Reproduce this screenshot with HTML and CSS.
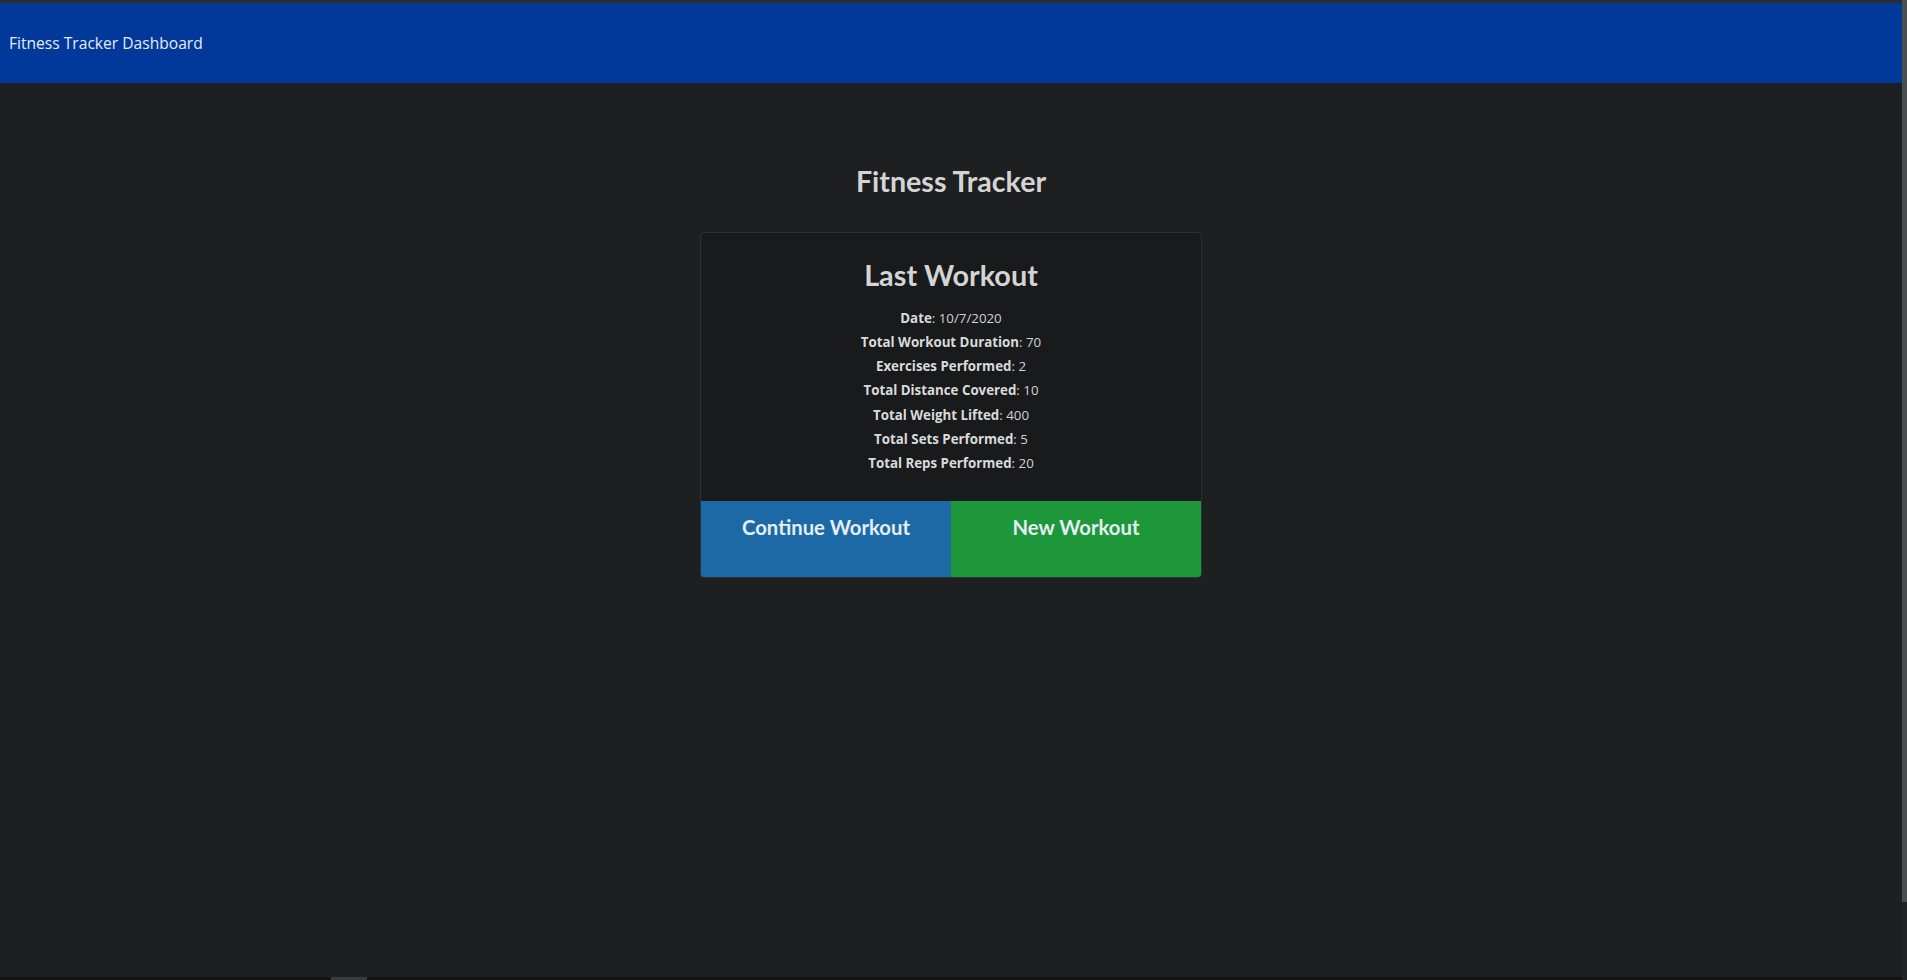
FILE: index.html
```html
<!DOCTYPE html>
<html lang="en">
<head>
<meta charset="utf-8">
<title>Fitness Tracker Dashboard</title>
<link rel="stylesheet" href="styles.css">
</head>
<body>
<div class="app">
  <div class="main">
    <div class="topline"></div>
    <header class="navbar">Fitness Tracker Dashboard</header>
    <section class="content">
      <h1 class="page-title">Fitness Tracker</h1>
      <div class="card">
        <h2 class="card-title">Last Workout</h2>
        <div class="stats">
          <div class="stat"><strong>Date</strong>: 10/7/2020</div>
          <div class="stat"><strong>Total Workout Duration</strong>: 70</div>
          <div class="stat"><strong>Exercises Performed</strong>: 2</div>
          <div class="stat"><strong>Total Distance Covered</strong>: 10</div>
          <div class="stat"><strong>Total Weight Lifted</strong>: 400</div>
          <div class="stat"><strong>Total Sets Performed</strong>: 5</div>
          <div class="stat"><strong>Total Reps Performed</strong>: 20</div>
        </div>
        <div class="actions">
          <a class="btn btn-continue">Continue Workout</a>
          <a class="btn btn-new">New Workout</a>
        </div>
      </div>
    </section>
    <div class="bottomline"><span class="bottom-mark"></span></div>
  </div>
  <div class="scrollbar"><div class="thumb"></div></div>
</div>
</body>
</html>
```
FILE: styles.css
```css
html, body {
  margin: 0;
  padding: 0;
  height: 100%;
}
body {
  background: #1e1f21;
  color: #d6d6d6;
  font-family: "Open Sans", "Noto Sans", sans-serif;
}
.app {
  display: flex;
  height: 980px;
  overflow: hidden;
}
.main {
  flex: 1;
  display: flex;
  flex-direction: column;
}
.topline {
  height: 3px;
  background: #2b2c2f;
}
.navbar {
  height: 80px;
  background: #00399a;
  color: #e6ecf8;
  display: flex;
  align-items: center;
  padding-left: 9px;
  font-size: 15.6px;
}
.content {
  flex: 1;
  display: flex;
  flex-direction: column;
  align-items: center;
}
.page-title {
  font-family: Lato, sans-serif;
  font-weight: 700;
  font-size: 28.6px;
  line-height: 1.2;
  margin: 81px 0 34px;
  color: #d4d4d4;
}
.card {
  width: 500px;
  background: #191a1c;
  border: 1px solid #2e3034;
  border-radius: 4px;
  display: flex;
  flex-direction: column;
  align-items: stretch;
  overflow: hidden;
}
.card-title {
  font-family: Lato, sans-serif;
  font-weight: 700;
  font-size: 28.8px;
  line-height: 1.2;
  margin: 25px 0 13px;
  text-align: center;
  color: #d4d4d4;
}
.stats {
  display: flex;
  flex-direction: column;
  align-items: center;
  font-size: 13.3px;
  line-height: 24.2px;
  color: #d2d2d2;
  margin-bottom: 26px;
}
.stat strong {
  font-weight: 700;
  color: #dadada;
}
.actions {
  display: flex;
  height: 76px;
}
.btn {
  flex: 1;
  display: flex;
  justify-content: center;
  align-items: flex-start;
  padding-top: 14px;
  font-family: Lato, sans-serif;
  font-weight: 700;
  font-size: 20.3px;
  line-height: 1.2;
  color: #e4eef4;
}
.btn-continue {
  background: #1c69a6;
}
.btn-new {
  background: #1d9739;
}
.bottomline {
  height: 3px;
  background: #131314;
  position: relative;
}
.bottom-mark {
  position: absolute;
  left: 331px;
  top: 0;
  width: 36px;
  height: 3px;
  background: #3a3b3d;
}
.scrollbar {
  width: 5px;
  background: #222325;
}
.thumb {
  height: 902px;
  background: #4a4e50;
}
```
